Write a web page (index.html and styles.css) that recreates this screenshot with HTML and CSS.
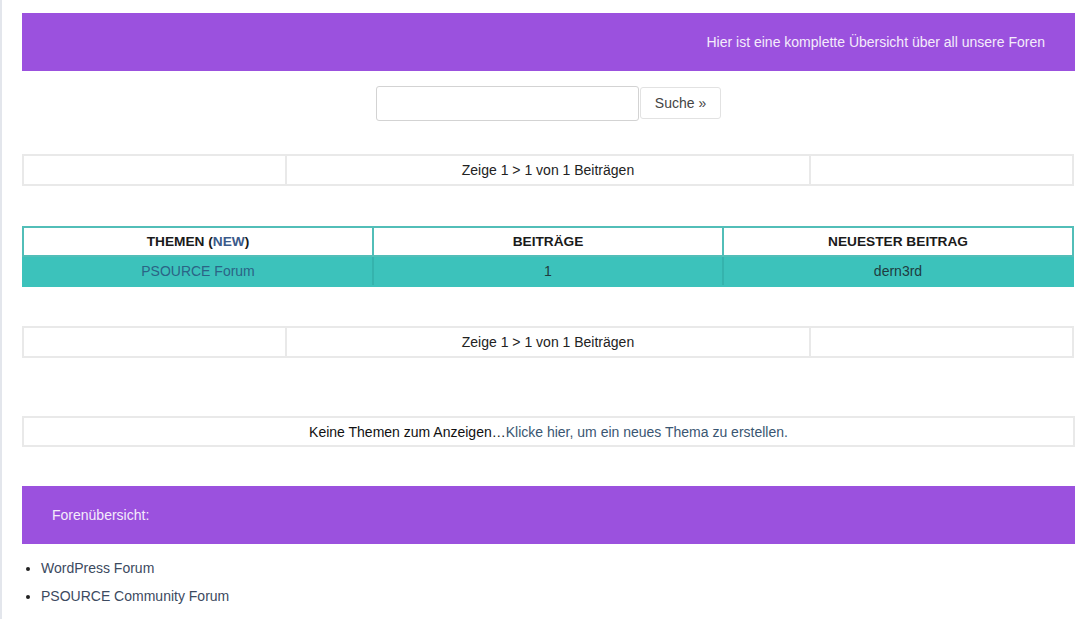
FILE: index.html
```html
<!DOCTYPE html>
<html lang="de">
<head>
<meta charset="utf-8">
<title>Foren</title>
<link rel="stylesheet" href="styles.css">
</head>
<body>
<div class="page">
  <div class="banner banner-top">Hier ist eine komplette Übersicht über all unsere Foren</div>

  <form class="search">
    <input class="search-input" type="text">
    <button class="search-btn" type="button">Suche »</button>
  </form>

  <table class="pager pager-first">
    <tr><td class="c1"></td><td class="c2">Zeige 1 &gt; 1 von 1 Beiträgen</td><td class="c3"></td></tr>
  </table>

  <table class="forums">
    <thead>
      <tr><th>THEMEN (<a class="new" href="#">NEW</a>)</th><th>BEITRÄGE</th><th>NEUESTER BEITRAG</th></tr>
    </thead>
    <tbody>
      <tr><td><a class="forum-link" href="#">PSOURCE Forum</a></td><td>1</td><td>dern3rd</td></tr>
    </tbody>
  </table>

  <table class="pager pager-second">
    <tr><td class="c1"></td><td class="c2">Zeige 1 &gt; 1 von 1 Beiträgen</td><td class="c3"></td></tr>
  </table>

  <div class="empty">Keine Themen zum Anzeigen…<a class="empty-link" href="#">Klicke hier, um ein neues Thema zu erstellen.</a></div>

  <div class="banner banner-bottom">Forenübersicht:</div>

  <ul class="forum-list">
    <li><a href="#">WordPress Forum</a></li>
    <li><a href="#">PSOURCE Community Forum</a></li>
  </ul>
</div>
</body>
</html>
```

FILE: styles.css
```css
html, body {
  margin: 0;
  padding: 0;
  background: #ffffff;
}
body {
  font-family: "Liberation Sans", Arial, sans-serif;
  font-size: 14px;
  color: #222222;
  border-left: 2px solid #e3e6ec;
  min-height: 619px;
  box-sizing: border-box;
}
.page {
  padding: 13px 17px 0 20px;
}
a {
  text-decoration: none;
}
.banner {
  background: #9b51de;
  color: #f4ecfb;
  height: 58px;
  display: flex;
  align-items: center;
  font-size: 14px;
}
.banner-top {
  justify-content: flex-end;
  padding-right: 30px;
}
.banner-bottom {
  padding-left: 30px;
  margin-top: 39px;
}
.search {
  display: flex;
  justify-content: center;
  align-items: center;
  margin: 15px 0 0 0;
  height: 34px;
}
.search-input {
  width: 263px;
  height: 35px;
  box-sizing: border-box;
  border: 1px solid #d3d3d3;
  border-radius: 3px;
  margin: 0;
  padding: 0 6px;
}
.search-btn {
  width: 81px;
  height: 32px;
  box-sizing: border-box;
  margin: 0 0 0 1px;
  border: 1px solid #e2e2e2;
  border-radius: 3px;
  background: #ffffff;
  color: #444444;
  font-family: "Liberation Sans", Arial, sans-serif;
  font-size: 14px;
  padding: 0;
}
table {
  border-collapse: collapse;
  width: 1052px;
  table-layout: fixed;
}
.pager td {
  border: 2px solid #e9e9e9;
  height: 28px;
  padding: 0;
  text-align: center;
  color: #222222;
}
.pager-first {
  margin-top: 34px;
}
.pager-second {
  margin-top: 39px;
}
.pager .c1 { width: 25%; }
.pager .c2 { width: 50%; }
.pager .c3 { width: 25%; }
.forums {
  margin-top: 40px;
}
.forums th,
.forums td {
  border: 2px solid #52beb8;
  padding: 0;
  text-align: center;
  width: 33.33%;
}
.forums th {
  height: 27px;
  background: #ffffff;
  font-weight: bold;
  color: #1a1a1a;
  font-size: 13.7px;
}
.forums tbody td {
  height: 28px;
  background: #3cc2bb;
  color: #1f3b40;
  border-color: #3cc2bb #35b3ad #3cc2bb #35b3ad;
}
.forums tbody td:first-child {
  border-left-color: #3cc2bb;
}
.forums tbody td:last-child {
  border-right-color: #3cc2bb;
}
.new {
  color: #3b5a8a;
}
.forum-link {
  color: #2b6486;
}
.empty {
  margin-top: 58px;
  border: 2px solid #e9e9e9;
  height: 27px;
  display: flex;
  align-items: center;
  justify-content: center;
  color: #111111;
}
.empty-link {
  color: #3a5672;
}
.forum-list {
  margin: 15px 0 0 0;
  padding-left: 19px;
  list-style: disc;
}
.forum-list li {
  line-height: 18px;
  margin-bottom: 10px;
  color: #222222;
}
.forum-list a {
  color: #3c4a60;
}
```
